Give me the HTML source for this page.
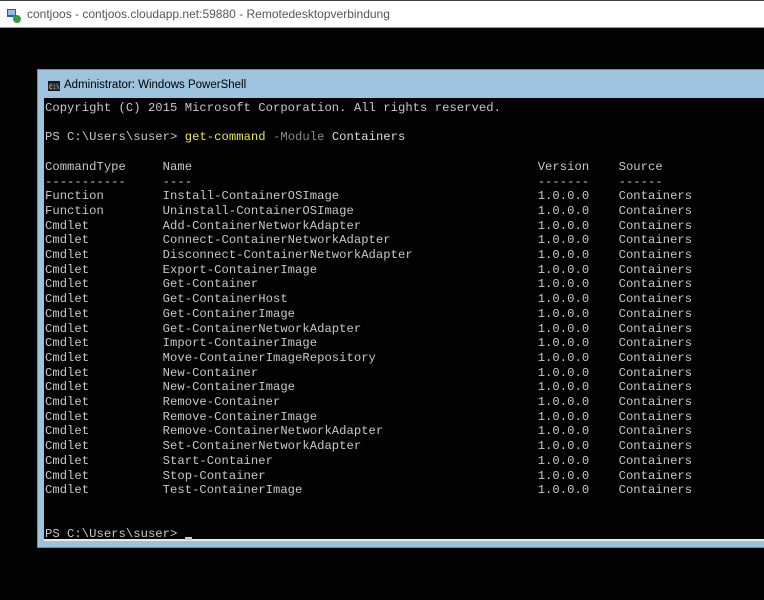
<!DOCTYPE html>
<html><head><meta charset="utf-8"><style>
html,body{margin:0;padding:0;width:764px;height:600px;overflow:hidden;background:#030303;}
#top{position:absolute;left:0;top:0;width:764px;height:28px;background:#fff;border-top:1px solid #444;box-sizing:border-box;border-bottom:1px solid #999;}
#top .t{position:absolute;left:27px;top:6px;font:12px "Liberation Sans",sans-serif;color:#555;}
#win{position:absolute;left:37px;top:69px;width:740px;height:479px;background:#9dc3de;border:1px solid #6f8fa8;box-sizing:border-box;}
#win .tt{position:absolute;left:26px;top:9px;font:11.5px "Liberation Sans",sans-serif;color:#000;}
#con{position:absolute;left:44px;top:98px;width:730px;height:443px;background:#020202;border-bottom:2px solid #e8e8e8;box-sizing:border-box;}
pre{margin:0;padding:3px 0 0 1px;font:12.2px/14.7px "Liberation Mono",monospace;letter-spacing:0.04px;color:#c8c8c8;}
.y{color:#e6e65a}.g{color:#8a8a8a}.w{color:#dcdcdc}
.cur{display:inline-block;width:7px;height:3px;background:#c8c8c8;vertical-align:-3px;}
</style></head><body>
<div id="top">
<svg style="position:absolute;left:7px;top:8px" width="14" height="14"><rect x="0" y="0" width="9" height="8" fill="#2a5aa8"/><rect x="1" y="1" width="7" height="5" fill="#8fb7e8"/><circle cx="10" cy="10" r="4" fill="#3a9a3a"/></svg>
<span class="t">contjoos - contjoos.cloudapp.net:59880 - Remotedesktopverbindung</span></div>
<div id="win">
<svg style="position:absolute;left:10px;top:11px" width="12" height="10"><rect width="12" height="10" fill="#1a1a1a"/><rect x="1" y="2" width="10" height="7" fill="#333"/><text x="1" y="8" font-size="6" fill="#ddd" font-family="Liberation Mono">C:\</text></svg>
<span class="tt">Administrator: Windows PowerShell</span></div>
<div id="con"><pre>Copyright (C) 2015 Microsoft Corporation. All rights reserved.

PS C:\Users\suser&gt; <span class="y">get-command</span> <span class="g">-Module</span> <span class="w">Containers</span>

CommandType     Name                                               Version    Source
-----------     ----                                               -------    ------
Function        Install-ContainerOSImage                           1.0.0.0    Containers
Function        Uninstall-ContainerOSImage                         1.0.0.0    Containers
Cmdlet          Add-ContainerNetworkAdapter                        1.0.0.0    Containers
Cmdlet          Connect-ContainerNetworkAdapter                    1.0.0.0    Containers
Cmdlet          Disconnect-ContainerNetworkAdapter                 1.0.0.0    Containers
Cmdlet          Export-ContainerImage                              1.0.0.0    Containers
Cmdlet          Get-Container                                      1.0.0.0    Containers
Cmdlet          Get-ContainerHost                                  1.0.0.0    Containers
Cmdlet          Get-ContainerImage                                 1.0.0.0    Containers
Cmdlet          Get-ContainerNetworkAdapter                        1.0.0.0    Containers
Cmdlet          Import-ContainerImage                              1.0.0.0    Containers
Cmdlet          Move-ContainerImageRepository                      1.0.0.0    Containers
Cmdlet          New-Container                                      1.0.0.0    Containers
Cmdlet          New-ContainerImage                                 1.0.0.0    Containers
Cmdlet          Remove-Container                                   1.0.0.0    Containers
Cmdlet          Remove-ContainerImage                              1.0.0.0    Containers
Cmdlet          Remove-ContainerNetworkAdapter                     1.0.0.0    Containers
Cmdlet          Set-ContainerNetworkAdapter                        1.0.0.0    Containers
Cmdlet          Start-Container                                    1.0.0.0    Containers
Cmdlet          Stop-Container                                     1.0.0.0    Containers
Cmdlet          Test-ContainerImage                                1.0.0.0    Containers


PS C:\Users\suser&gt; <span class="cur"></span></pre></div>
</body></html>
